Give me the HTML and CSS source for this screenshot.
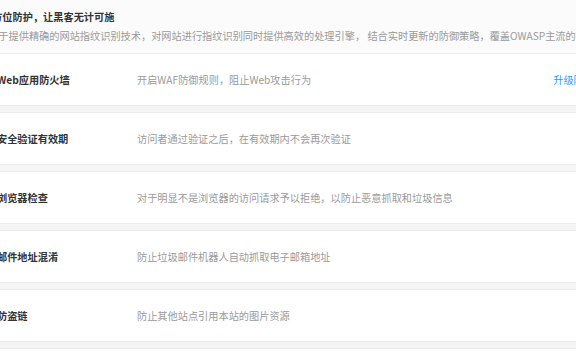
FILE: index.html
```html
<!DOCTYPE html>
<html lang="zh-CN">
	<head>
		<meta charset="UTF-8" />
		<meta name="viewport" content="width=device-width, initial-scale=1.0" />
		<title>安全防护</title>

		<link rel="stylesheet" href="styles.css">
	</head>
	<body>
		<div id="page">
			<div class="intro">
				<h3 class="intro-title">全方位防护，让黑客无计可施</h3>
				<p class="intro-desc">
					致力于提供精确的网站指纹识别技术，对网站进行指纹识别同时提供高效的处理引擎，&nbsp;结合实时更新的防御策略，覆盖OWASP主流的攻击防护规则
				</p>
			</div>

			<ul class="features">
				<li class="feature">
					<span class="feature-name">Web应用防火墙</span>
					<span class="feature-desc">开启WAF防御规则，阻止Web攻击行为</span>
					<a class="feature-action" href="#">升级防护</a>
				</li>
				<li class="feature">
					<span class="feature-name">安全验证有效期</span>
					<span class="feature-desc">访问者通过验证之后，在有效期内不会再次验证</span>
				</li>
				<li class="feature">
					<span class="feature-name">浏览器检查</span>
					<span class="feature-desc">对于明显不是浏览器的访问请求予以拒绝，以防止恶意抓取和垃圾信息</span>
				</li>
				<li class="feature">
					<span class="feature-name">邮件地址混淆</span>
					<span class="feature-desc">防止垃圾邮件机器人自动抓取电子邮箱地址</span>
				</li>
				<li class="feature">
					<span class="feature-name">防盗链</span>
					<span class="feature-desc">防止其他站点引用本站的图片资源</span>
				</li>
				<li class="feature">
					<span class="feature-name">IP黑名单</span>
					<span class="feature-desc">禁止指定的IP地址访问本站</span>
				</li>
			</ul>
		</div>
	</body>
</html>
```

FILE: styles.css
```css
body {
	margin: 0;
	background-color: #f5f5f6;
	overflow: hidden;
	font-family: "Noto Sans CJK SC", "Liberation Sans", sans-serif;
}

#page {
	width: 640px;
	margin-left: -18px;
}

.intro {
	background-color: #fbfbfb;
	padding: 9px 0 9px 0;
	white-space: nowrap;
	overflow: hidden;
}

.intro-title {
	margin: 0;
	font-size: 10.2px;
	line-height: 16px;
	font-weight: bold;
	color: #333;
}

.intro-desc {
	margin: 3px 0 0 0;
	text-indent: -4px;
	font-size: 10.2px;
	line-height: 16px;
	color: #9a9a9a;
}

.features {
	list-style: none;
	margin: 0;
	padding: 0;
	display: flex;
	flex-direction: column;
	gap: 6px;
}

.feature {
	display: flex;
	align-items: center;
	height: 51px;
	padding: 0 28px 0 15px;
	background-color: #fff;
	border-top: 1px solid #ebebeb;
	border-bottom: 1px solid #ebebeb;
	white-space: nowrap;
}

.feature-name {
	width: 140px;
	flex-shrink: 0;
	font-size: 10.2px;
	font-weight: bold;
	color: #333;
}

.feature-desc {
	flex: 1;
	font-size: 10.2px;
	color: #9a9a9a;
}

.feature-action {
	font-size: 10.2px;
	color: #20a0ff;
	text-decoration: none;
}
```
